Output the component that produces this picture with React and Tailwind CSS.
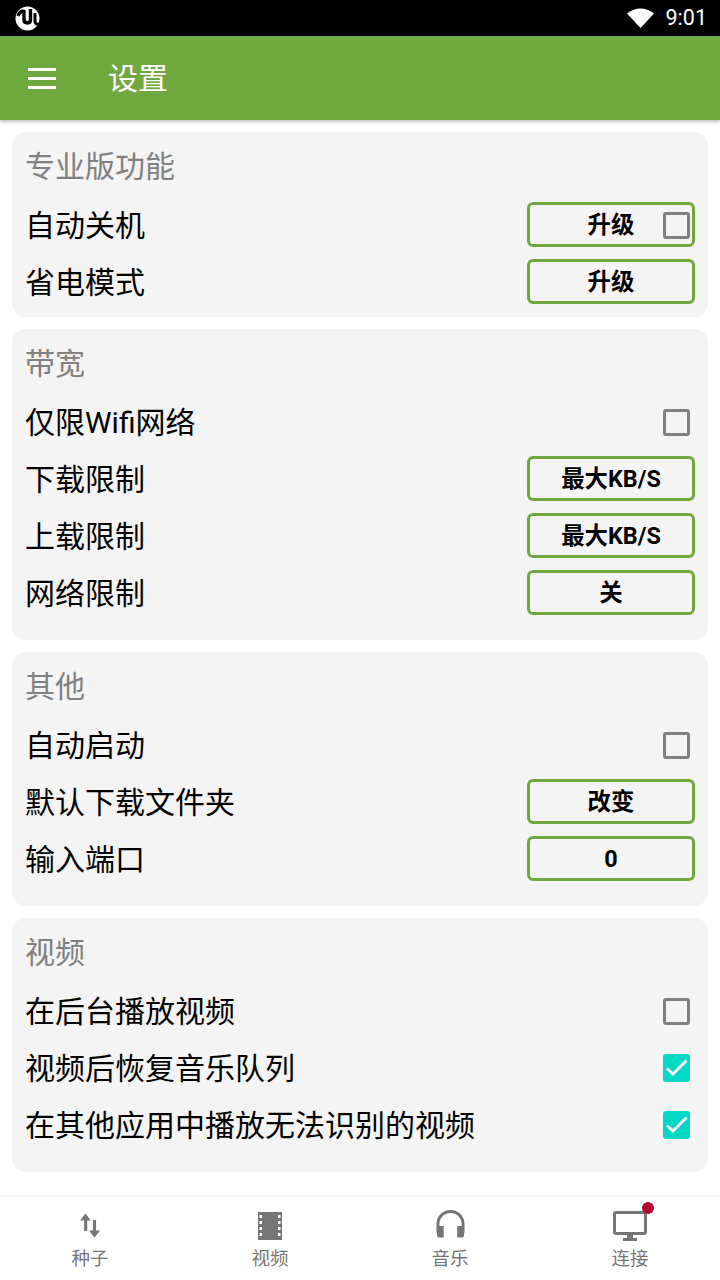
const font = { fontFamily: 'Roboto, "Noto Sans CJK SC", sans-serif' };

function Check({ on }) {
  if (on) {
    return (
      <span className="mb-[2px] w-[27px] h-[28px] rounded-[3px] bg-[#00d9c6] flex items-center justify-center">
        <svg width="27" height="28" viewBox="0 0 27 28" fill="none">
          <path d="M4 14.5 L10 20 L23.5 6.5" stroke="#fff" strokeWidth="3" />
        </svg>
      </span>
    );
  }
  return <span className="block w-[27px] h-[27px] rounded-[3px] border-[3px] border-[#808080]" />;
}

function Btn({ children, check }) {
  return (
    <div className="relative mb-[2px] pt-[2px] w-[168px] h-[45px] rounded-[6px] border-[3px] border-[#70a840] flex items-center justify-center text-[23.4px] font-bold text-black">
      {children}
      {check && (
        <span className="absolute right-[2px] top-[7px]">
          <Check />
        </span>
      )}
    </div>
  );
}

function Row({ label, btn, btnCheck, check, on }) {
  return (
    <div className="h-[57px] flex items-center justify-between">
      <span className="text-[30px] text-black leading-none">{label}</span>
      {btn && <Btn check={btnCheck}>{btn}</Btn>}
      {check && (
        <span className="mr-[5px]">
          <Check on={on} />
        </span>
      )}
    </div>
  );
}

function Card({ title, children, className }) {
  return (
    <section className={`bg-[#f4f4f4] rounded-[14px] pl-[13px] pr-[13px] ${className}`}>
      <h2 className="h-[65px] pt-[15px] text-[30px] leading-[40px] text-[#808080] font-normal">{title}</h2>
      {children}
    </section>
  );
}

function NavItem({ icon, label, badge }) {
  return (
    <div className="relative flex-1 flex flex-col items-center">
      <div className="relative h-[36px] w-[40px] mt-[11px] flex items-center justify-center">
        {icon}
        {badge && <span className="absolute right-[-4px] top-[-6px] w-[12px] h-[12px] rounded-full bg-[#b8002b]" />}
      </div>
      <span className="text-[18.5px] leading-[24px] mt-[3px] text-[#757575]">{label}</span>
    </div>
  );
}

export default function App() {
  return (
    <div className="w-[720px] h-[1280px] bg-white flex flex-col overflow-hidden" style={font}>
      <div className="h-[36px] bg-black flex items-center justify-between pl-[15px] pr-[13px] text-white">
        <svg width="25" height="25" viewBox="0 0 25 25">
          <circle cx="12.5" cy="12.5" r="12" fill="#fff" />
          <path d="M3 10 Q5 4.5 9 5.5 L9 13.5 Q9 17 12.5 17 Q15.5 17 15.5 13.5 L15.5 3" fill="none" stroke="#000" strokeWidth="3.4" />
          <path d="M20 7 L20 15 Q20 19 24 18" fill="none" stroke="#000" strokeWidth="3" />
        </svg>
        <div className="flex items-center gap-[12px]">
          <svg width="27" height="20" viewBox="0 0 27 20">
            <path d="M0 5.5 Q13.5 -4.5 27 5.5 L13.5 20 Z" fill="#fff" />
          </svg>
          <span className="text-[21.5px] leading-none">9:01</span>
        </div>
      </div>

      <header className="relative z-10 h-[84px] bg-[#70a840] flex items-center pl-[28px] shadow-[0_2px_4px_rgba(0,0,0,0.25)]">
        <div className="w-[28px] flex flex-col gap-[6px]">
          <span className="block h-[3px] bg-white" />
          <span className="block h-[3px] bg-white" />
          <span className="block h-[3px] bg-white" />
        </div>
        <h1 className="ml-[52px] mt-[2px] text-[30px] text-white font-normal leading-none">设置</h1>
      </header>

      <main className="flex-1 px-[12px] pt-[12px] flex flex-col gap-[12px]">
        <Card title="专业版功能" className="pb-[6px]">
          <Row label="自动关机" btn="升级" btnCheck />
          <Row label="省电模式" btn="升级" />
        </Card>
        <Card title="带宽" className="pb-[18px]">
          <Row label="仅限Wifi网络" check />
          <Row label="下载限制" btn="最大KB/S" />
          <Row label="上载限制" btn="最大KB/S" />
          <Row label="网络限制" btn="关" />
        </Card>
        <Card title="其他" className="pb-[18px]">
          <Row label="自动启动" check />
          <Row label="默认下载文件夹" btn="改变" />
          <Row label="输入端口" btn="0" />
        </Card>
        <Card title="视频" className="pb-[18px]">
          <Row label="在后台播放视频" check />
          <Row label="视频后恢复音乐队列" check on />
          <Row label="在其他应用中播放无法识别的视频" check on />
        </Card>
      </main>

      <nav className="h-[85px] border-t-2 border-[#f5f5f5] flex">
        <NavItem
          label="种子"
          icon={
            <svg className="mb-[2px]" width="22" height="27" viewBox="0 0 24 28" fill="#757575">
              <path d="M7 1 L13 8.5 L9 8.5 L9 20 L5.6 20 L5.6 8.5 L1.2 8.5 Z" />
              <path d="M17 27 L11 19.5 L15.2 19.5 L15.2 8 L18.6 8 L18.6 19.5 L23 19.5 Z" />
            </svg>
          }
        />
        <NavItem
          label="视频"
          icon={
            <svg width="24" height="28" viewBox="0 0 24 28">
              <path fillRule="evenodd" fill="#757575" d="M0 0H24V28H0Z M1.5 3V6H4V3Z M1.5 9V12H4V9Z M1.5 15V18H4V15Z M1.5 21V24H4V21Z M20 3V6H22.5V3Z M20 9V12H22.5V9Z M20 15V18H22.5V15Z M20 21V24H22.5V21Z" />
            </svg>
          }
        />
        <NavItem
          label="音乐"
          icon={
            <svg className="mb-[4px]" width="29" height="30" viewBox="0 0 30 30" fill="none">
              <path d="M2 24 V15 A13 13 0 0 1 28 15 V24" stroke="#757575" strokeWidth="3" />
              <path d="M1 17 H8 V29 H4 Q1 29 1 26 Z M22 17 H29 V26 Q29 29 26 29 H22 Z" fill="#757575" />
            </svg>
          }
        />
        <NavItem
          badge
          label="连接"
          icon={
            <svg width="34" height="30" viewBox="0 0 34 30" fill="none">
              <rect x="1.5" y="1.5" width="31" height="21" rx="1.5" stroke="#757575" strokeWidth="3" />
              <path d="M14 24 H20 V27 H24 V30 H10 V27 H14 Z" fill="#757575" />
            </svg>
          }
        />
      </nav>
    </div>
  );
}
